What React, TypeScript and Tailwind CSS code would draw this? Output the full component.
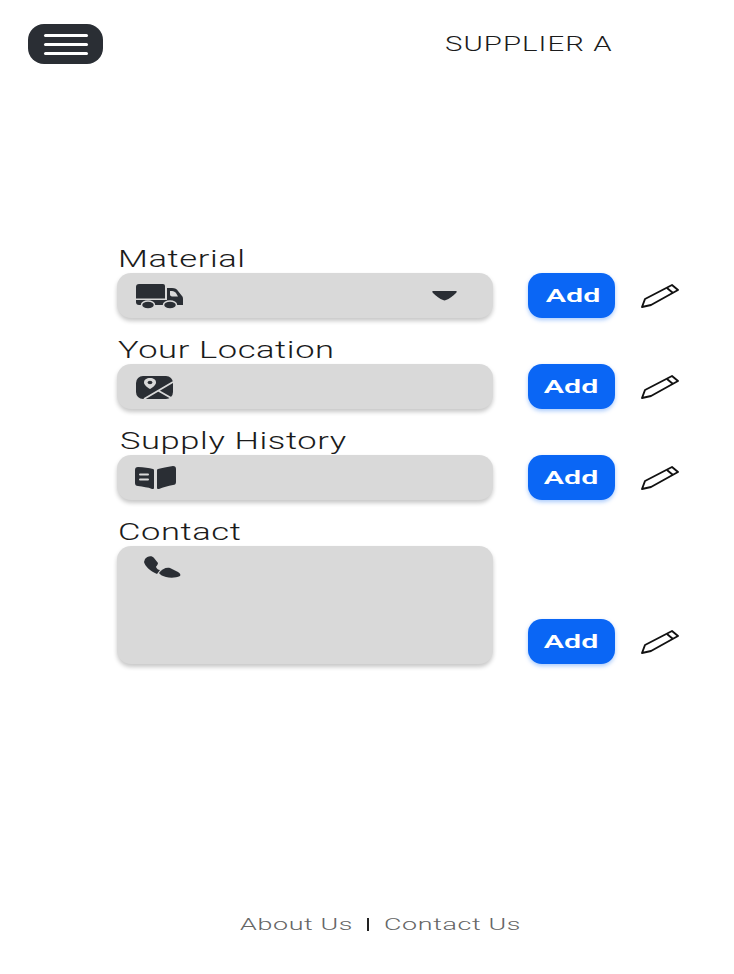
import { ReactNode } from 'react'

function TruckIcon() {
    return (
        <svg width="47" height="25" viewBox="0 0 47 25" fill="#2a2e34" className="mt-[1px]">
            <path d="M0 3a3 3 0 0 1 3-3h24a2 2 0 0 1 2 2v12.500H0z" />
            <path d="M31 4h5c3 0 5 1 6 3l4 5c1 1 1 2 1 4v4a1 1 0 0 1-1 1H31z" />
            <path d="M34 7h2c2 0 3 1 4 2l2 3.500h-6c-1 0-2-1-2-2z" fill="#d9d9d9" />
            <path d="M0 16h47v5H3a3 3 0 0 1-3-3z" />
            <ellipse cx="12" cy="21" rx="6.500" ry="4" stroke="#d9d9d9" strokeWidth="1.500" />
            <ellipse cx="34" cy="21" rx="6.500" ry="4" stroke="#d9d9d9" strokeWidth="1.500" />
        </svg>
    )
}

function MapIcon() {
    return (
        <svg width="37" height="23" viewBox="0 0 37 23" className="mt-[2px]">
            <rect x="0" y="0" width="37" height="23" rx="7" fill="#2a2e34" />
            <path d="M8 23 L37 6 M22 14.500 L37 23" stroke="#d9d9d9" strokeWidth="1.800" fill="none" />
            <path d="M8 6.500c0-3 2.500-4.500 6-4.500s6 1.500 6 4.500c0 2.500-3.500 5-6 6.500-2.500-1.500-6-4-6-6.500z" fill="#d9d9d9" />
            <ellipse cx="14" cy="6.500" rx="2.400" ry="1.700" fill="#2a2e34" />
        </svg>
    )
}

function BookIcon() {
    return (
        <svg width="41" height="23" viewBox="0 0 41 23" className="-ml-[1px]">
            <path d="M0 4c0-2 1-3 3-3 6 0 11 1 15 2 1 0 1 1 1 2v17c0 1-1 1-2 1-4-2-9-2-14-3-2 0-3-1-3-3z" fill="#2a2e34" />
            <path d="M22 5c0-1 0-2 1-2 4-1 9-2 15-3 2 0 3 1 3 3v13c0 2-1 3-3 3-5 1-10 2-14 4-1 0-2 0-2-1z" fill="#2a2e34" />
            <path d="M5 8.500h8M5 13.500h8" stroke="#d9d9d9" strokeWidth="2" strokeLinecap="round" />
        </svg>
    )
}

function PhoneIcon() {
    return (
        <svg width="37" height="22" viewBox="0 0 37 22" fill="#2a2e34">
            <path d="M1 3C3 0 8-1 10 2l4 5c0 2-2 3-2 4 1 2 2 3 4 3l-3 4C6 15 1 10 0 6z" />
            <path d="M15 17c3-4 7-6 11-5l8 4c2 1 3 3 2 4-4 2-10 2-14 1-3-1-6-2-7-4z" />
        </svg>
    )
}

function PencilIcon() {
    return (
        <svg width="38" height="24" viewBox="0 0 38 24" fill="none" stroke="#111" strokeWidth="1.900" strokeLinejoin="round">
            <path d="M1 23 L4 15 L31 1 L37 6 L10 21 Z" />
            <path d="M26 4 L32 9" />
        </svg>
    )
}

function Field({ label, icon, caret, tall, shift, addClass }: { label: string; icon: ReactNode; caret?: boolean; tall?: boolean; shift?: boolean; addClass?: string }) {
    return (
        <div>
            <div className={`h-[31px] leading-[35px] ${shift ? 'pl-[3px]' : 'pl-[1px]'}`}>
                <span className="inline-block origin-left scale-x-[1.5] text-[23px] font-light tracking-[0.4px] text-[#1b1b1b]">{label}</span>
            </div>
            <div className="flex items-end gap-[35px]">
                <div className={`flex w-[376px] justify-between rounded-[14px] bg-[#d9d9d9] shadow-[0_3px_4px_rgba(0,0,0,0.22)] ${tall ? 'h-[118px] pl-[27px] pt-[10px]' : 'h-[45px] items-center pl-[19px] pr-[36px]'}`}>
                    {icon}
                    {caret && <svg width="25" height="10" viewBox="0 0 25 10"><path d="M1 0h23c1 0 1 1 0 2c-3 3-7 6-10 7c-1 .5-2 .5-3 0C8 8 4 5 1 2C0 1 0 0 1 0z" fill="#2a2e34" /></svg>}
                </div>
                <div className="flex items-center gap-[26px]">
                    <button className={`flex h-[45px] w-[87px] items-center justify-center rounded-[14px] bg-[#0a66f5] pt-[1px] shadow-[0_2px_4px_rgba(10,102,245,0.35)] ${addClass ?? ''}`}>
                        <span className="scale-x-[1.6] text-[19px] font-semibold text-white">Add</span>
                    </button>
                    <PencilIcon />
                </div>
            </div>
        </div>
    )
}

export default function App() {
    return (
        <div className="flex h-[974px] flex-col bg-white font-['Roboto',sans-serif]">
            <header className="flex items-center pl-[28px] pt-[24px]">
                <button className="flex h-[40px] w-[75px] flex-col items-center justify-center gap-[6px] rounded-[16px] bg-[#2a2e34]">
                    <span className="h-[3px] w-[44px] rounded-full bg-white" />
                    <span className="h-[3px] w-[44px] rounded-full bg-white" />
                    <span className="h-[3px] w-[44px] rounded-full bg-white" />
                </button>
                <div className="ml-[342px] origin-left scale-x-[1.47] text-[20px] font-light tracking-[0.7px] text-[#1b1b1b]">SUPPLIER A</div>
            </header>
            <main className="mt-[178px] flex flex-col gap-[15px] pl-[117px]">
                <Field label="Material" icon={<TruckIcon />} caret addClass="pl-[4px]" />
                <Field label="Your Location" icon={<MapIcon />} />
                <Field label="Supply History" icon={<BookIcon />} shift />
                <Field label="Contact" icon={<PhoneIcon />} tall />
            </main>
            <footer className="mt-auto flex items-center pb-[37px] pl-[240px] text-[#666]">
                <span className="w-[113px] whitespace-nowrap">
                    <span className="inline-block origin-left scale-x-[1.58] text-[17px] font-light tracking-[0.4px]">About Us</span>
                </span>
                <span className="ml-[14px] h-[13px] w-[2px] bg-[#222]" />
                <span className="ml-[15px] whitespace-nowrap">
                    <span className="inline-block origin-left scale-x-[1.58] text-[17px] font-light tracking-[0.4px]">Contact Us</span>
                </span>
            </footer>
        </div>
    )
}
